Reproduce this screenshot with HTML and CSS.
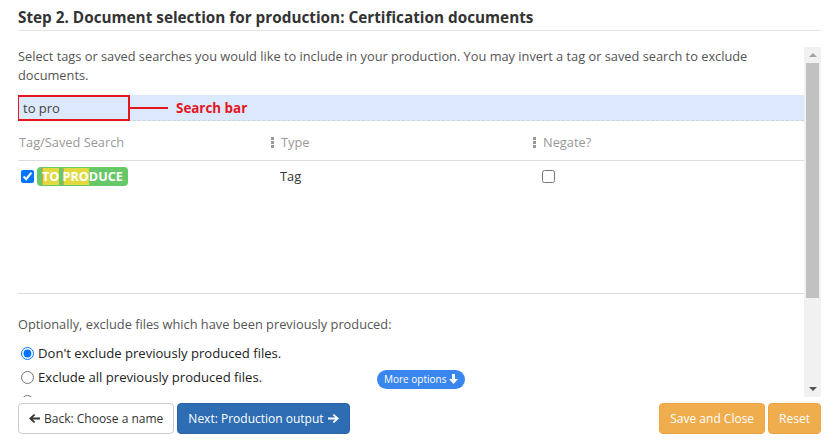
FILE: index.html
```html
<!DOCTYPE html>
<html>
<head>
<meta charset="utf-8">
<link rel="stylesheet" href="styles.css">
</head>
<body>
<div class="page">
  <h2 class="title">Step 2. Document selection for production: Certification documents</h2>
  <div class="scroller">
    <div class="scroll-content">
      <p class="intro">Select tags or saved searches you would like to include in your production. You may invert a tag or saved search to exclude documents.</p>
      <div class="search-row">
        <div class="search-box">to pro</div>
        <span class="callout-line"></span>
        <span class="callout-text">Search bar</span>
      </div>
      <div class="table">
        <div class="thead">
          <div class="th th-first">Tag/Saved Search</div>
          <div class="th"><svg class="grip" width="4" height="11" viewBox="0 0 4 11"><rect x="0" y="0" width="3" height="3"/><rect x="0" y="4" width="3" height="3"/><rect x="0" y="8" width="3" height="3"/></svg>Type</div>
          <div class="th"><svg class="grip" width="4" height="11" viewBox="0 0 4 11"><rect x="0" y="0" width="3" height="3"/><rect x="0" y="4" width="3" height="3"/><rect x="0" y="8" width="3" height="3"/></svg>Negate?</div>
        </div>
        <div class="tbody">
          <div class="trow">
            <div class="td td-first"><input type="checkbox" class="cb" checked><span class="badge"><mark class="hl">TO</mark> <mark class="hl">PRO</mark>DUCE</span></div>
            <div class="td td-type">Tag</div>
            <div class="td td-neg"><input type="checkbox" class="cb"></div>
          </div>
        </div>
      </div>
      <p class="opt">Optionally, exclude files which have been previously produced:</p>
      <div class="radios">
        <label class="radio-row"><input type="radio" name="ex" checked><span>Don't exclude previously produced files.</span></label>
        <div class="radio-row">
          <label class="radio-label"><input type="radio" name="ex"><span>Exclude all previously produced files.</span></label>
          <span class="more-btn">More options <svg width="9" height="10" viewBox="0 0 9 10"><path d="M3 0h3v5h3L4.5 10 0 5h3z" fill="#fff"/></svg></span>
        </div>
        <div class="radio-row radio-peek"><input type="radio" name="ex"></div>
      </div>
    </div>
    <div class="scrollbar">
      <div class="sb-btn"><span class="tri-up"></span></div>
      <div class="sb-track"><div class="sb-thumb"></div></div>
      <div class="sb-btn sb-btn-down"><span class="tri-down"></span></div>
    </div>
  </div>
  <div class="footer">
    <div class="footer-left">
      <span class="btn btn-default"><svg width="11" height="11" viewBox="0 0 11 11"><path d="M0 5.5L5 1l1.3 1.3L3.6 4.6H11v1.8H3.6l2.7 2.3L5 10z" fill="#333"/></svg>Back: Choose a name</span>
      <span class="btn btn-primary">Next: Production output<svg width="11" height="11" viewBox="0 0 11 11"><path d="M11 5.5L6 1 4.7 2.3l2.7 2.3H0v1.8h7.4L4.7 8.7 6 10z" fill="#fff"/></svg></span>
    </div>
    <div class="footer-right">
      <span class="btn btn-warning">Save and Close</span>
      <span class="btn btn-warning">Reset</span>
    </div>
  </div>
</div>
</body>
</html>
```

FILE: styles.css
```css
* { box-sizing: border-box; }
html, body { margin: 0; padding: 0; background: #fff; }
body {
  font-family: "Open Sans", "Liberation Sans", sans-serif;
  font-size: 12.8px;
  color: #333;
}
.page {
  width: 821px;
  padding-left: 18px;
}
.title {
  margin: 0;
  padding: 7px 0 3px;
  font-size: 15.3px;
  line-height: 20px;
  font-weight: 700;
  color: #333;
  border-bottom: 1px solid #e5e5e5;
}
.scroller {
  margin-top: 15px;
  height: 351px;
  display: flex;
  overflow: hidden;
}
.scroll-content {
  flex: 1;
  min-width: 0;
  padding-top: 1px;
  overflow: hidden;
}
.intro {
  margin: 0 0 10px;
  line-height: 19px;
  color: #555;
}
.search-row {
  height: 26px;
  background: #dce9fc;
  border-bottom: 1px dashed #c9d3df;
  display: flex;
  align-items: center;
}
.search-box {
  margin-left: -1px;
  width: 113px;
  height: 26px;
  border: 2px solid #e3161f;
  padding-left: 4px;
  line-height: 22px;
  color: #444;
  font-size: 13px;
  align-self: flex-start;
}
.callout-line {
  width: 38px;
  height: 2px;
  background: #e3161f;
}
.callout-text {
  margin-left: 8px;
  font-weight: 700;
  font-size: 13.4px;
  color: #e3161f;
}
.thead, .trow {
  display: grid;
  grid-template-columns: 252px 262px 1fr;
}
.thead {
  border-bottom: 1px solid #ddd;
}
.th {
  padding: 12px 0 8px;
  line-height: 19px;
  color: #999;
  display: flex;
  align-items: center;
}
.th-first { padding-left: 1px; }
.grip {
  fill: #999;
  margin: 0 6px 0 1px;
}
.tbody {
  height: 133px;
  border-bottom: 1px solid #ddd;
}
.trow { padding-top: 5px; }
.td {
  display: flex;
  align-items: center;
  height: 20px;
}
.cb {
  margin: 0 3px 0 3px;
  width: 13px;
  height: 13px;
}
.badge {
  display: inline-block;
  height: 19px;
  line-height: 19px;
  padding: 0 5px;
  background: #66c866;
  color: #fff;
  font-weight: 700;
  font-size: 12.6px;
  border-radius: 4px;
  white-space: pre;
}
.hl {
  display: inline-block;
  height: 17px;
  line-height: 17px;
  vertical-align: top;
  margin-top: 1px;
  background: #e2d93f;
  color: #fff;
  padding: 0;
  box-shadow: inset 1px 0 0 #e0a33a;
}
.td-type { padding-left: 10px; }
.td-neg { padding-left: 7px; }
.opt {
  margin: 21px 0 7px;
  line-height: 19px;
  color: #555;
}
.radio-row {
  display: flex;
  align-items: center;
  height: 24px;
  color: #222;
  font-size: 13.1px;
}
.radio-label {
  display: flex;
  align-items: center;
  width: 359px;
}
.radio-row input, .radio-label input {
  margin: 0 4px 0 3px;
  width: 13px;
  height: 13px;
}
.more-btn {
  display: inline-flex;
  align-items: center;
  gap: 3px;
  height: 19px;
  padding: 0 7px;
  margin-top: 4px;
  background: #3a86ef;
  color: #fff;
  font-size: 10px;
  border-radius: 10px;
}
.scrollbar {
  width: 17px;
  margin-top: 1px;
  background: #f1f1f1;
  display: flex;
  flex-direction: column;
}
.sb-btn {
  height: 16px;
  display: flex;
  align-items: center;
  justify-content: center;
}
.tri-up {
  width: 0; height: 0;
  border-left: 4px solid transparent;
  border-right: 4px solid transparent;
  border-bottom: 4px solid #a3a3a3;
}
.tri-down {
  width: 0; height: 0;
  border-left: 4px solid transparent;
  border-right: 4px solid transparent;
  border-top: 4px solid #505050;
}
.sb-track {
  flex: 1;
  padding: 0 2px;
}
.sb-thumb {
  height: 235px;
  background: #c1c1c1;
}
.footer {
  margin-top: 6px;
  display: flex;
  justify-content: space-between;
}
.footer-left, .footer-right {
  display: flex;
  gap: 3px;
}
.btn {
  display: inline-flex;
  align-items: center;
  gap: 4px;
  height: 31px;
  padding: 0 10px;
  border-radius: 4px;
  border: 1px solid transparent;
  font-size: 12px;
  white-space: nowrap;
}
.btn-default {
  background: #fff;
  border-color: #ccc;
  color: #333;
}
.btn-primary {
  background: #2e6db4;
  border-color: #2a64a6;
  color: #fff;
}
.btn-warning {
  background: #f0ad4e;
  border-color: #eea43f;
  color: #fff;
}
```
